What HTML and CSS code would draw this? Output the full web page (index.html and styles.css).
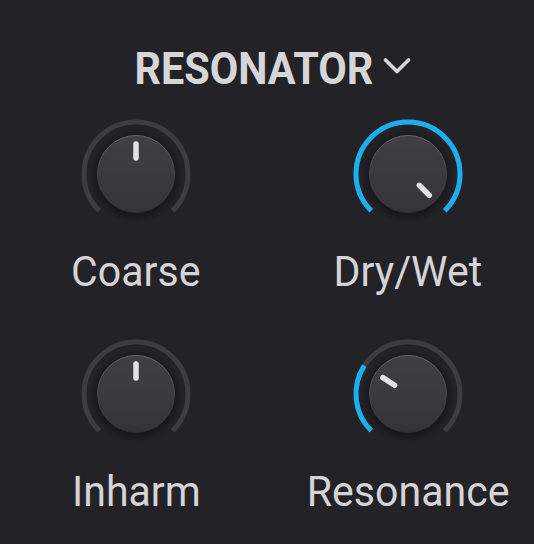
FILE: index.html
```html
<!DOCTYPE html>
<html>
<head>
<meta charset="utf-8">
<link rel="stylesheet" href="styles.css">
</head>
<body>
<div class="panel">
  <div class="title">
    <span class="title-text">RESONATOR</span>
    <svg class="chevron" width="30" height="20" viewBox="0 0 30 20">
      <polyline points="2.5,3 14,14.5 25.5,3" fill="none" stroke="#d6d6d8" stroke-width="3.6" stroke-linecap="round" stroke-linejoin="round"/>
    </svg>
  </div>
  <div class="grid">
    <div class="cell">
      <svg class="knob" width="120" height="120" viewBox="0 0 120 120">
        <defs>
          <linearGradient id="body" x1="0" y1="0" x2="0" y2="1">
            <stop offset="0" stop-color="#404044"/>
            <stop offset="1" stop-color="#353538"/>
          </linearGradient>
          <linearGradient id="rim" x1="0" y1="0" x2="0" y2="1">
            <stop offset="0" stop-color="#67676b"/>
            <stop offset="0.5" stop-color="#46464a"/>
            <stop offset="1" stop-color="#2e2e31"/>
          </linearGradient>
          <radialGradient id="shadow" cx="0.5" cy="0.5" r="0.5">
            <stop offset="0.78" stop-color="#151517" stop-opacity="0.9"/>
            <stop offset="1" stop-color="#151517" stop-opacity="0"/>
          </radialGradient>
        </defs>
        <path class="track" d="M 23.23 96.77 A 52 52 0 1 1 96.77 96.77"/>
        <circle cx="60" cy="62" r="47" fill="url(#shadow)"/>
        <circle cx="60" cy="60" r="38.5" fill="url(#body)" stroke="url(#rim)" stroke-width="1"/>
        <line class="pointer" x1="60" y1="44" x2="60" y2="30" transform="rotate(0 60 60)"/>
      </svg>
      <div class="label">Coarse</div>
    </div>
    <div class="cell">
      <svg class="knob" width="120" height="120" viewBox="0 0 120 120">
        <path class="track" d="M 23.23 96.77 A 52 52 0 1 1 96.77 96.77"/>
        <path class="value" d="M 23.23 96.77 A 52 52 0 1 1 96.77 96.77"/>
        <circle cx="60" cy="62" r="47" fill="url(#shadow)"/>
        <circle cx="60" cy="60" r="38.5" fill="url(#body)" stroke="url(#rim)" stroke-width="1"/>
        <line class="pointer" x1="60" y1="44" x2="60" y2="30" transform="rotate(135 60 60)"/>
      </svg>
      <div class="label">Dry/Wet</div>
    </div>
    <div class="cell">
      <svg class="knob" width="120" height="120" viewBox="0 0 120 120">
        <path class="track" d="M 23.23 96.77 A 52 52 0 1 1 96.77 96.77"/>
        <circle cx="60" cy="62" r="47" fill="url(#shadow)"/>
        <circle cx="60" cy="60" r="38.5" fill="url(#body)" stroke="url(#rim)" stroke-width="1"/>
        <line class="pointer" x1="60" y1="44" x2="60" y2="30" transform="rotate(0 60 60)"/>
      </svg>
      <div class="label">Inharm</div>
    </div>
    <div class="cell">
      <svg class="knob" width="120" height="120" viewBox="0 0 120 120">
        <path class="track" d="M 23.23 96.77 A 52 52 0 1 1 96.77 96.77"/>
        <path class="value" d="M 23.23 96.77 A 52 52 0 0 1 16.39 31.68"/>
        <circle cx="60" cy="62" r="47" fill="url(#shadow)"/>
        <circle cx="60" cy="60" r="38.5" fill="url(#body)" stroke="url(#rim)" stroke-width="1"/>
        <line class="pointer" x1="60" y1="44" x2="60" y2="30" transform="rotate(-57 60 60)"/>
      </svg>
      <div class="label">Resonance</div>
    </div>
  </div>
</div>
</body>
</html>
```

FILE: styles.css
```css
html, body {
  margin: 0;
  padding: 0;
  background: #232227;
  overflow: hidden;
}
.panel {
  width: 544px;
  height: 544px;
  padding-top: 43px;
  box-sizing: border-box;
  font-family: Roboto, "Liberation Sans", sans-serif;
  color: #d4d4d6;
}
.title {
  display: flex;
  justify-content: center;
  align-items: center;
  height: 52px;
  gap: 9px;
  padding-left: 3px;
}
.title-text {
  font-weight: 700;
  font-size: 45px;
  line-height: 52px;
  display: inline-block;
  color: #d6d6d8;
  transform: scaleX(0.92);
  margin: 0 -10px;
}
.chevron {
  display: block;
  margin-top: -4px;
}
.grid {
  display: grid;
  grid-template-columns: 272px 272px;
  row-gap: 38px;
  margin-top: 19px;
}
.cell {
  display: flex;
  flex-direction: column;
  align-items: center;
}
.knob {
  display: block;
}
.track {
  fill: none;
  stroke: #3c3c41;
  stroke-width: 5;
}
.value {
  fill: none;
  stroke: #18b1ee;
  stroke-width: 5;
}
.pointer {
  stroke: #e2e2e4;
  stroke-width: 5.5;
  stroke-linecap: round;
}
.label {
  margin-top: 12px;
  font-size: 43px;
  line-height: 50px;
  white-space: nowrap;
  transform: scaleX(0.955);
}
```
